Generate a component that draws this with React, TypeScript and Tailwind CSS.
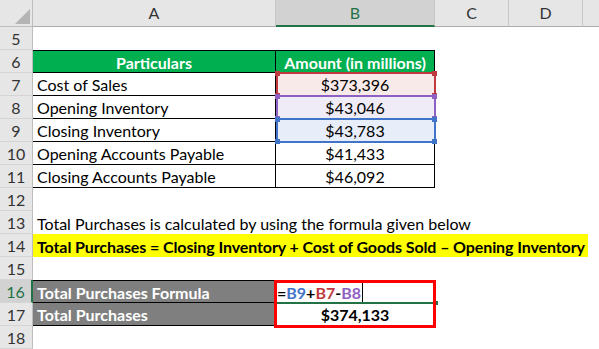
import React from "react";

const COLS = "grid grid-cols-[33px_243px_159px_74px_74px_1fr]";

type RowProps = {
  n: number;
  active?: boolean;
  children?: React.ReactNode;
};

function Row({ n, active, children }: RowProps) {
  return (
    <div className={`${COLS} h-[23px]`}>
      <div
        className={`flex items-center justify-center border-b border-b-[#d4d4d4] pt-[2px] ${
          active
            ? "bg-[#d2d2d2] text-[#217346] border-r-2 border-r-[#217346]"
            : "bg-[#e6e6e6] text-[#333] border-r border-r-[#bdbdbd]"
        }`}
      >
        {n}
      </div>
      {children}
    </div>
  );
}

function ColHeaders() {
  return (
    <div className={`${COLS} h-[27px] bg-[#e6e6e6] text-[#333]`}>
      <div className="relative border-r border-b border-[#bdbdbd]">
        <div className="absolute left-[15px] top-[9px] w-[15px] h-[15px] bg-[#b4b4b4] [clip-path:polygon(100%_0,100%_100%,0_100%)]" />
      </div>
      <div className="flex items-center justify-center border-r border-r-[#c8c8c8] border-b border-b-[#ababab]">
        A
      </div>
      <div className="flex items-center justify-center bg-[#d2d2d2] text-[#217346] border-r border-r-[#c8c8c8] border-b-2 border-b-[#217346]">
        B
      </div>
      <div className="flex items-center justify-center border-r border-r-[#c8c8c8] border-b border-b-[#ababab]">
        C
      </div>
      <div className="flex items-center justify-center border-r border-r-[#c8c8c8] border-b border-b-[#ababab]">
        D
      </div>
      <div className="border-b border-b-[#ababab]" />
    </div>
  );
}

const items = [
  { n: 7, label: "Cost of Sales", value: "$373,396", fill: "bg-[#f9eaea]" },
  { n: 8, label: "Opening Inventory", value: "$43,046", fill: "bg-[#efebf7]" },
  { n: 9, label: "Closing Inventory", value: "$43,783", fill: "bg-[#e7eef9]" },
  { n: 10, label: "Opening Accounts Payable", value: "$41,433", fill: "" },
  { n: 11, label: "Closing Accounts Payable", value: "$46,092", fill: "" },
];

function RefBox({ top, color }: { top: number; color: string }) {
  const handle = `absolute w-[5px] h-[5px] ${color}`;
  return (
    <div className="absolute left-[276px] w-[160px] h-[25px]" style={{ top }}>
      <div className={`absolute inset-x-[1px] top-[0px] h-[2px] ${color}`} />
      <div className={`absolute inset-x-[1px] bottom-[0px] h-[2px] ${color}`} />
      <div className={`absolute inset-y-[1px] left-[0px] w-[2px] ${color}`} />
      <div className={`absolute inset-y-[1px] right-[0px] w-[2px] ${color}`} />
      <div className={`${handle} -left-[1px] -top-[1px]`} />
      <div className={`${handle} -right-[1px] -top-[1px]`} />
      <div className={`${handle} -left-[1px] -bottom-[1px]`} />
      <div className={`${handle} -right-[1px] -bottom-[1px]`} />
    </div>
  );
}

export default function App() {
  return (
    <div className="relative w-[599px] h-[349px] overflow-hidden bg-white font-['Lato',sans-serif] text-[16px] leading-none text-black">
      <ColHeaders />
      <Row n={5} />
      <Row n={6}>
        <div className="flex items-center justify-center bg-[#00b050] text-white font-bold border-t border-b border-r border-black pt-[2px]">
          Particulars
        </div>
        <div className="flex items-center justify-center bg-[#00b050] text-white font-bold border-t border-b border-r border-black pt-[2px]">
          Amount (in millions)
        </div>
      </Row>
      {items.map((it) => (
        <Row key={it.n} n={it.n}>
          <div className="flex items-center pl-[4px] pt-[2px] border-b border-r border-black whitespace-nowrap">
            {it.label}
          </div>
          <div
            className={`flex items-center justify-center pt-[2px] border-b border-r border-black ${it.fill}`}
          >
            {it.value}
          </div>
        </Row>
      ))}
      <Row n={12} />
      <Row n={13}>
        <div className="col-span-5 flex items-center pl-[4px] pt-[2px] whitespace-nowrap">
          Total Purchases is calculated by using the formula given below
        </div>
      </Row>
      <Row n={14}>
        <div className="col-span-5 flex">
          <div className="w-[555px] flex items-center pl-[4px] pt-[2px] bg-[#ffff00] font-bold tracking-[-0.1px] whitespace-nowrap">
            Total Purchases = Closing Inventory + Cost of Goods Sold – Opening Inventory
          </div>
        </div>
      </Row>
      <Row n={15} />
      <Row n={16} active>
        <div className="flex items-center pl-[4px] pt-[2px] bg-[#7f7f7f] text-white font-bold border-t border-b border-r border-black whitespace-nowrap">
          Total Purchases Formula
        </div>
        <div className="flex items-center pl-[1px] pt-[2px] font-bold border-t border-r border-black whitespace-nowrap">
          <span>=</span>
          <span className="text-[#3f74c8]">B9</span>
          <span>+</span>
          <span className="text-[#c0393e]">B7</span>
          <span>-</span>
          <span className="text-[#8e60c2]">B8</span>
          <span className="ml-[1px] w-[1px] h-[20px] bg-black" />
        </div>
      </Row>
      <Row n={17}>
        <div className="flex items-center pl-[4px] pt-[2px] bg-[#7f7f7f] text-white font-bold border-b border-r border-black whitespace-nowrap">
          Total Purchases
        </div>
        <div className="flex items-center justify-center pt-[2px] font-bold border-b border-r border-black">
          $374,133
        </div>
      </Row>
      <Row n={18} />

      {/* range-finder boxes for the formula refs */}
      <RefBox top={72} color="bg-[#c0393e]" />
      <RefBox top={95} color="bg-[#8e60c2]" />
      <RefBox top={118} color="bg-[#3f74c8]" />

      {/* active cell underline + fill handle */}
      <div className="absolute left-[276px] top-[302px] w-[160px] h-[2px] bg-[#217346]" />
      <div className="absolute left-[434px] top-[301px] w-[4px] h-[4px] bg-[#217346]" />

      {/* red annotation box */}
      <div className="absolute left-[274px] top-[280px] w-[162px] h-[48px] border-[3px] border-[#ff0000]" />
    </div>
  );
}
